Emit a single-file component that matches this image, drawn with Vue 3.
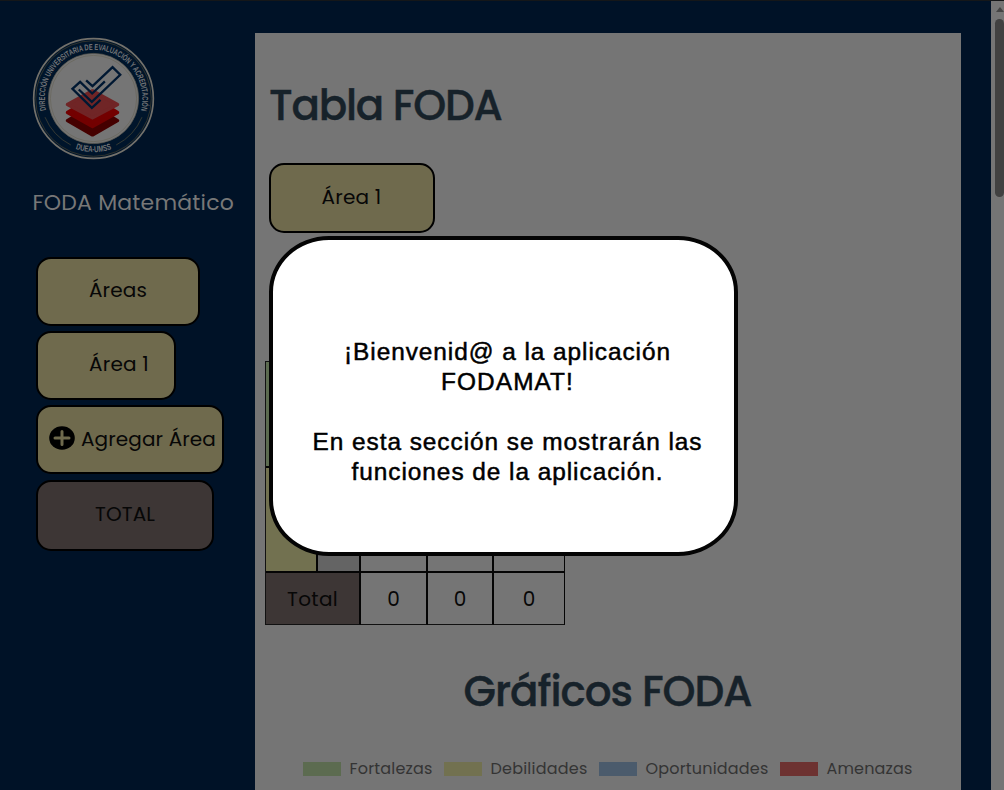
<script setup>
// Spreads the letters of a label so that it fills the given width.
const vFit = {
  mounted(el, { value }) {
    const n = Array.from(el.textContent).length
    const natural = el.getBoundingClientRect().width
    el.style.letterSpacing = `${(value - natural) / n}px`
  },
}

const menu = [
  { label: 'Áreas', w: 58, cls: 'areas' },
  { label: 'Área 1', w: 60, cls: 'area' },
  { label: 'Agregar Área', w: 135, cls: 'add', icon: true },
  { label: 'TOTAL', w: 60, cls: 'total' },
]
const legend = [
  { label: 'Fortalezas', w: 83, cls: 'green' },
  { label: 'Debilidades', w: 97, cls: 'yellow' },
  { label: 'Oportunidades', w: 123, cls: 'blue' },
  { label: 'Amenazas', w: 86, cls: 'red' },
]
const message = [
  { text: '¡Bienvenid@ a la aplicación', w: 327 },
  { text: 'FODAMAT!', w: 133 },
  { text: '' },
  { text: 'En esta sección se mostrarán las', w: 390 },
  { text: 'funciones de la aplicación.', w: 312 },
]
</script>

<template>
  <div class="page">
    <aside class="sidebar">
      <svg class="logo" viewBox="36 38 368 368">
        <defs>
          <path id="ringTop" d="M79 260A146 146 0 1 1 361 260" />
          <path id="ringBottom" d="M118 346A161 161 0 0 0 322 346" />
        </defs>
        <circle cx="220" cy="222" r="179" fill="#00152b" stroke="#73716b" stroke-width="5" />
        <circle cx="220" cy="222" r="173" fill="none" stroke="#45412f" stroke-width="2" />
        <circle cx="220" cy="222" r="135" fill="#757575" stroke="#5b584e" stroke-width="2" />
        <circle cx="220" cy="222" r="129" fill="none" stroke="#686558" stroke-width="2" />
        <path d="M75 278Q98 333 152 361M288 361Q342 333 365 278" fill="none" stroke="#504b38" stroke-width="2" />
        <text font-size="25"><textPath href="#ringTop" startOffset="3" textLength="530" lengthAdjust="spacingAndGlyphs">DIRECCIÓN UNIVERSITARIA DE EVALUACIÓN Y ACREDITACIÓN</textPath></text>
        <text font-size="26" text-anchor="middle"><textPath href="#ringBottom" startOffset="50%" textLength="110" lengthAdjust="spacingAndGlyphs">DUEA-UMSS</textPath></text>
        <g stroke-linejoin="round" stroke-width="10">
          <path d="M217 242L292 288L217 331L142 288Z" fill="#450000" stroke="#450000" />
          <path d="M217 218L292 264L217 306L142 264Z" fill="#730000" stroke="#730000" />
          <path d="M217 199L292 240L217 280L142 240Z" fill="#702526" stroke="#702526" />
        </g>
        <path d="M198 168L217 185L277 128L300 151L215 232L176 195M241 226L215 250L157 193L180 172L216 207L254 171" fill="none" stroke="#001832" stroke-width="7" />
      </svg>
      <div class="brand"><span v-fit="201.5">FODA Matemático</span></div>
      <nav class="menu">
        <div v-for="m in menu" :key="m.label" class="btn" :class="m.cls">
          <svg v-if="m.icon" class="plus" viewBox="0 0 26 26">
            <ellipse cx="13" cy="13" rx="12.8" ry="11.8" fill="#000" />
            <path d="M13 6.5V19.5M6 13H20" stroke="#6f6a4d" stroke-width="3" stroke-linecap="round" />
          </svg>
          <span v-fit="m.w">{{ m.label }}</span>
        </div>
      </nav>
    </aside>

    <main class="panel">
      <h1 class="title"><span v-fit="232.5">Tabla FODA</span></h1>
      <div class="btn tab"><span v-fit="60">Área 1</span></div>
      <table class="foda">
        <colgroup><col class="c1" /><col class="c2" /><col class="c3" /><col class="c4" /><col class="c5" /></colgroup>
        <tbody>
          <tr class="tall"><td class="green"></td><td class="grey"></td><td></td><td></td><td></td></tr>
          <tr class="tall"><td class="yellow"></td><td class="grey"></td><td></td><td></td><td></td></tr>
          <tr class="sum"><td class="brown" colspan="2"><span v-fit="51">Total</span></td><td>0</td><td>0</td><td>0</td></tr>
        </tbody>
      </table>
      <h1 class="charts"><span v-fit="288">Gráficos FODA</span></h1>
      <div class="legend">
        <div v-for="l in legend" :key="l.label" class="entry">
          <i class="swatch" :class="l.cls"></i><span v-fit="l.w">{{ l.label }}</span>
        </div>
      </div>
    </main>

    <div class="scroll"><i class="arrow"></i><i class="thumb"></i></div>

    <div class="modal">
      <p v-for="(m, i) in message" :key="i"><span v-if="m.text" v-fit="m.w">{{ m.text }}</span></p>
    </div>
  </div>
</template>

<style>
html, body { overflow: hidden; background: #001227; }
</style>

<style scoped>
.page {
  box-sizing: border-box;
  position: relative;
  width: 1004px;
  height: 790px;
  overflow: hidden;
  display: flex;
  background: #001227;
  border-top: 1px solid #151719;
  font-family: Poppins, Inter, sans-serif;
  font-size: 20px;
  color: #070707;
}
span { white-space: nowrap; }
.sidebar { width: 254px; flex: none; padding-top: 36px; box-sizing: border-box; }
.logo { display: block; width: 123px; height: 123px; margin-left: 31.5px; }
.logo text { font-family: "Liberation Sans", sans-serif; font-weight: 700; fill: #727477; }
.brand { margin: 28px 0 0 32.5px; height: 30px; line-height: 30px; font-size: 22px; color: #777; }
.menu { margin: 38.5px 0 0 36px; display: flex; flex-direction: column; align-items: flex-start; gap: 5.4px; }
.btn {
  box-sizing: border-box;
  display: flex;
  align-items: center;
  height: 69px;
  border: 2.5px solid #000;
  border-radius: 15px;
  background: #6f6a4d;
  padding-left: 51px;
  padding-bottom: 2px;
}
.areas { width: 164px; }
.area { width: 140px; }
.add { width: 188px; padding-left: 11px; }
.plus { width: 26px; height: 26px; margin-right: 6px; flex: none; position: relative; top: -1px; }
.total { width: 178px; height: 71px; background: #3d3635; padding-left: 57px; padding-bottom: 2px; }
.panel { width: 706px; flex: none; margin-top: 32px; margin-left: .5px; background: #757575; }
h1 { margin: 0; font-size: 42px; line-height: 60px; font-weight: 500; color: #17222a; -webkit-text-stroke: .4px #17222a; }
.title { margin: 43px 0 0 14.5px; }
.tab { width: 166px; height: 70px; margin: 27px 0 0 14px; }
.foda {
  margin: 128px 0 0 10px;
  width: 300px;
  table-layout: fixed;
  border-collapse: separate;
  border-spacing: 0;
  border: 1px solid #111;
  border-bottom: 0;
  border-right: 0;
}
.foda td { box-sizing: border-box; border: solid #050505; border-width: 0 2px 2px 0; padding: 0; text-align: center; }
.foda td:last-child { border-right-width: 1px; }
.foda .sum td { border-bottom: 1px solid #111; padding-left: 1px; }
.c1 { width: 52px; } .c2 { width: 43px; } .c3 { width: 67px; } .c4 { width: 66px; } .c5 { width: 71px; }
.tall { height: 105px; }
.tall:first-child { height: 106px; }
.sum { height: 52px; }
.green { background: #5c6b50; }
.yellow { background: #727150; }
.grey { background: #646464; }
.brown { background: #3d3635; }
.blue { background: #4b5b6c; }
.red { background: #6d3231; }
.charts { margin-top: 37px; text-align: center; }
.legend { display: flex; margin: 37px 0 0 48px; gap: 11px; font-size: 16px; line-height: 20px; color: #343434; }
.entry { display: flex; align-items: center; gap: 9px; }
.swatch { width: 38px; height: 14px; }
.scroll {
  width: 13.5px;
  margin-left: auto;
  background: #757575;
  display: flex;
  flex-direction: column;
  align-items: flex-end;
}
.arrow { margin: 6px 0 7px; border: 4.5px solid transparent; border-top: 0; border-bottom: 5px solid #444; }
.thumb { width: 9px; height: 178px; border-radius: 4.5px; background: #414141; }
.modal {
  position: absolute;
  left: 269px;
  top: 235px;
  box-sizing: border-box;
  width: 469px;
  height: 320px;
  border: 4px solid #040404;
  border-radius: 60px / 56px;
  background: #fff;
  padding-top: 97px;
  padding-left: 8px;
  text-align: center;
  font: 24.4px/30px "Liberation Sans", sans-serif;
  color: #000;
  -webkit-text-stroke: .5px #000;
}
.modal p { margin: 0; height: 30px; }
</style>
